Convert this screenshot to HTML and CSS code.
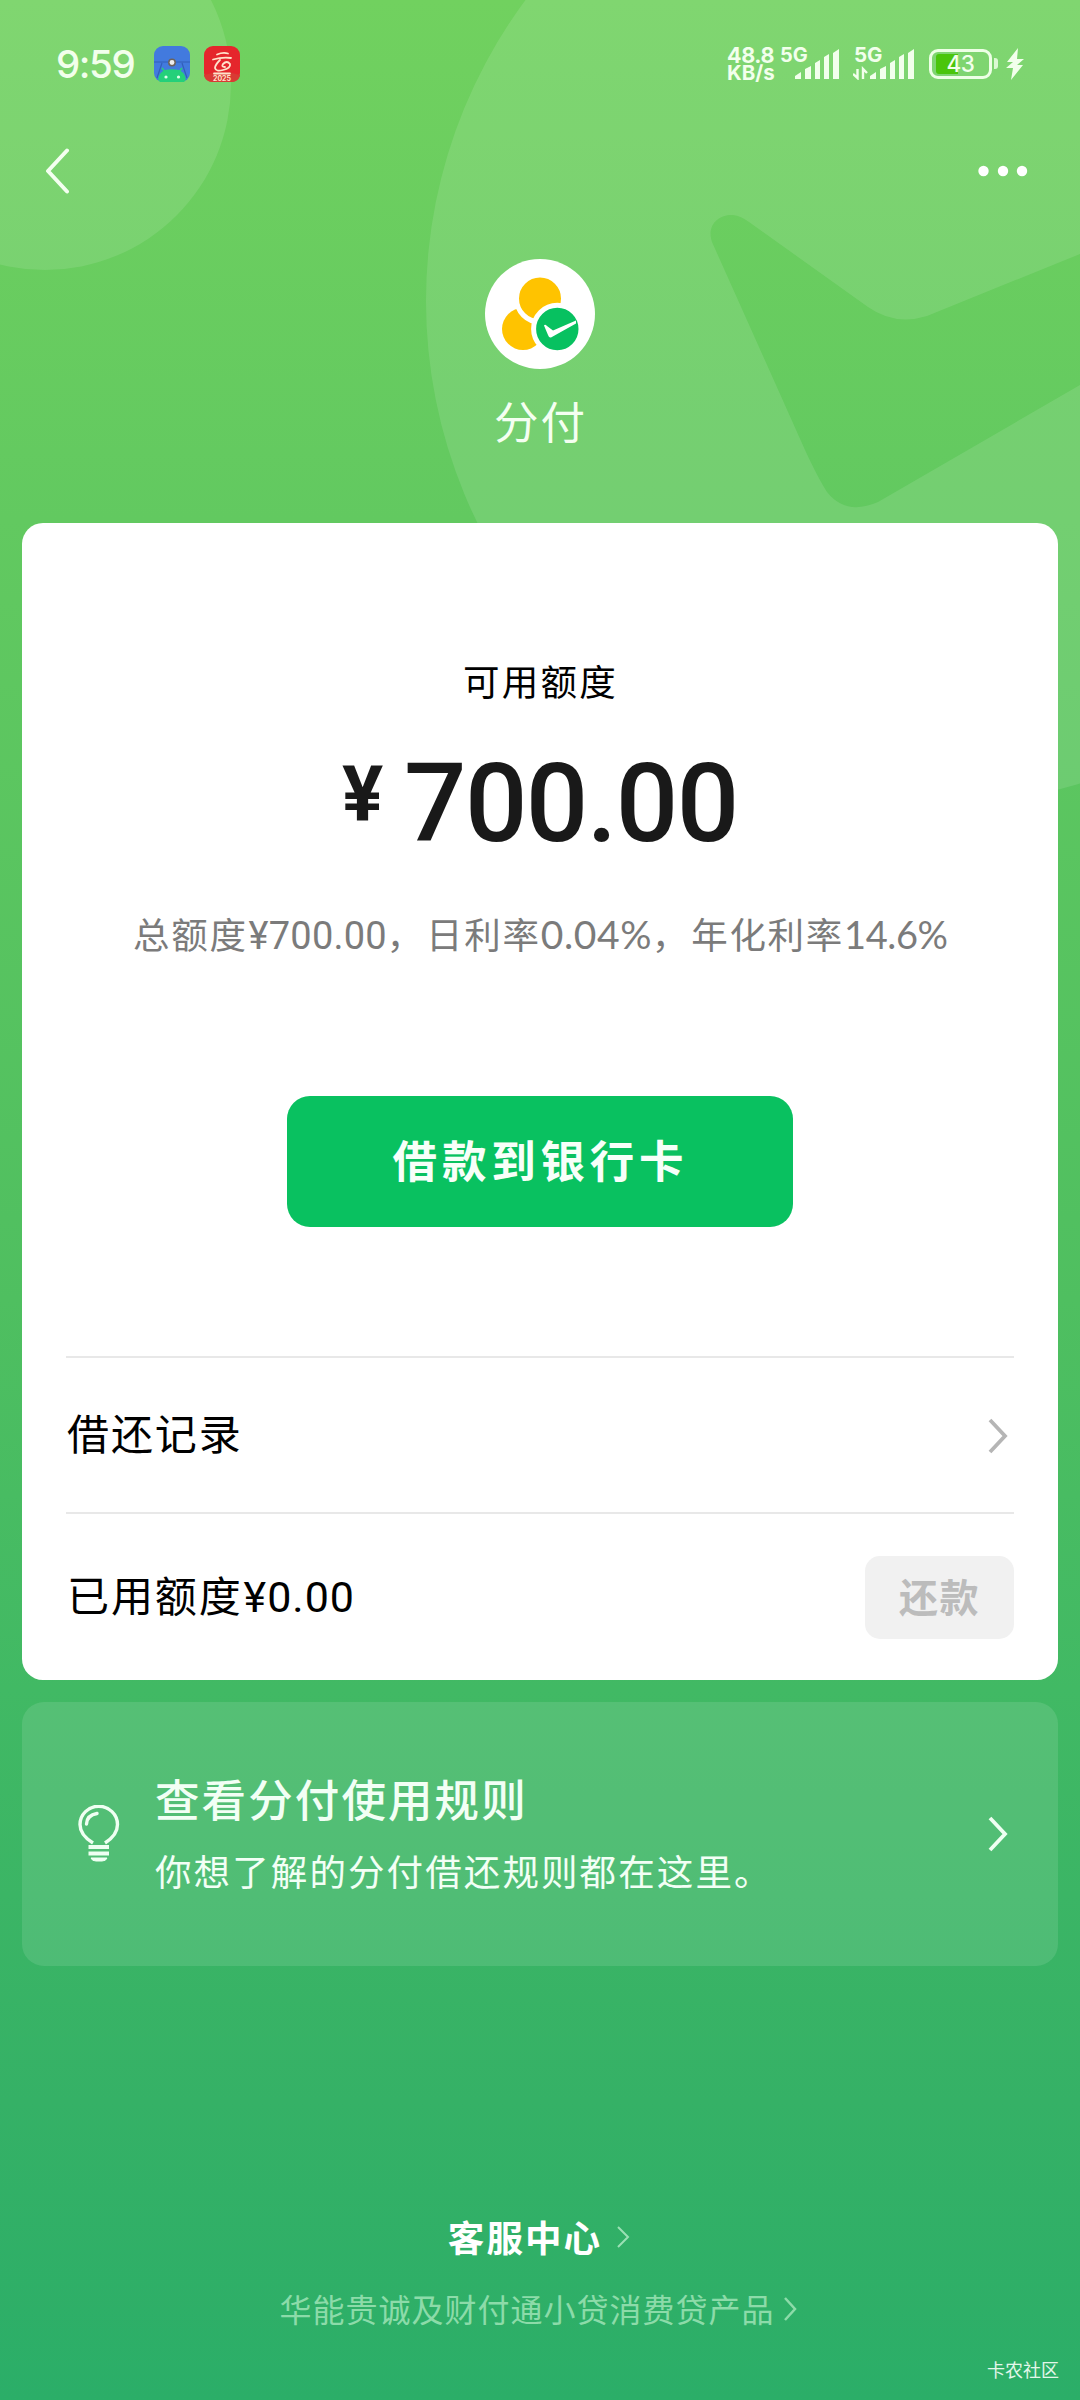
FILE: index.html
```html
<!DOCTYPE html>
<html lang="zh-CN">
<head>
<meta charset="utf-8">
<title>分付</title>
<link rel="stylesheet" href="styles.css">
</head>
<body>
<main class="page">
  <svg class="backdrop" viewBox="0 0 1080 2400" aria-hidden="true">
    <circle cx="45" cy="84" r="186" fill="#fff" fill-opacity=".11"/>
    <path fill="#fff" fill-opacity=".11" fill-rule="evenodd" d="M426 301a505 505 0 1 0 1010 0a505 505 0 1 0 -1010 0ZM712 242C706 224 720 214 733 215Q741 216 749 222L868 307Q895 326 927 316L1080 254L1440 90V200L1080 385L878 502Q846 516 827 492Q818 478 805 450Z"/>
  </svg>

  <header class="status">
    <span class="clock">9:59</span>
    <svg class="app app-first" viewBox="0 0 36 36">
      <rect width="36" height="36" rx="9" fill="#427ade"/>
      <path d="M0 16H36M8 17L3 32M28 17L33 32" stroke="#315fb8" stroke-width="1.2" fill="none"/>
      <circle cx="18" cy="16.500" r="3.200" fill="#eee" stroke="#6b625c" stroke-width="1.500"/>
      <path d="M5 33Q6 24 18 24T31 33Q30 36 27 36H9Q6 36 5 33ZM8 22L12 27M28 22L24 27" fill="#25d07a" stroke="#25d07a" stroke-width="1.500"/>
      <circle cx="12" cy="31" r="1.600" fill="#dfffe9"/><circle cx="24.500" cy="31" r="1.600" fill="#dfffe9"/>
    </svg>
    <svg class="app" viewBox="0 0 36 36">
      <rect width="36" height="36" rx="9" fill="#e5262c"/>
      <path d="M0 29Q18 23 36 29V30Q34 36 27 36H9Q2 36 0 30Z" fill="#d93a34"/>
      <path d="M13 8.500Q19 6 24 7.500M9 13.500Q18 11 27 12M16 14Q11 19 11 22Q12 26 19 24Q27 22 26 18Q23 14 19 18Q17 21 21 21M10 27.500H26" stroke="#ffe3cc" stroke-width="1.800" fill="none" stroke-linecap="round"/>
      <text class="app-year" x="18" y="35" text-anchor="middle">2025</text>
    </svg>
    <div class="speed"><span class="speed-value">48.8</span><span>KB/s</span></div>
    <div class="network">
      <span class="net-label">5G</span>
      <svg class="bars" viewBox="0 0 62 34"><path d="M17 33v-3l6-4v7ZM27 33V23l6-3v13ZM37 33V17l5-3v19ZM46 33V11l5-3v25ZM55 33V7l6-4v30Z" fill="#f2ffec"/></svg>
    </div>
    <div class="network network-second">
      <span class="net-label">5G</span>
      <svg class="bars" viewBox="0 0 62 34"><path d="M17 33v-3l6-4v7ZM27 33V23l6-3v13ZM37 33V17l5-3v19ZM46 33V11l5-3v25ZM55 33V7l6-4v30Z" fill="#f2ffec"/><path d="M0 28l4.500 4V23M10 33V23l4 4" stroke="#f2ffec" stroke-width="2.400" fill="none"/></svg>
    </div>
    <div class="battery"><i class="charge"></i><span class="percent">43</span></div>
    <i class="nub"></i>
    <svg class="bolt" viewBox="0 0 18 32"><path d="M12 0L1 14H7L0 20H7L5 32L17 17H11L18 11H11Z" fill="#f2ffec"/></svg>
  </header>

  <nav class="nav">
    <svg class="back" viewBox="0 0 25 46"><path d="M22 2.500L3 23L22 43.500" fill="none" stroke="#f4fff0" stroke-width="4" stroke-linecap="round" stroke-linejoin="round"/></svg>
    <svg class="more" viewBox="0 0 50 12"><g fill="#fff"><circle cx="5.500" cy="6" r="5.200"/><circle cx="25" cy="6" r="5.200"/><circle cx="44" cy="6" r="5.200"/></g></svg>
  </nav>

  <section class="brand">
    <svg class="logo" viewBox="0 0 110 110">
      <circle cx="55" cy="55" r="55" fill="#fff"/>
      <circle cx="38" cy="70" r="21" fill="#ffc300"/>
      <circle cx="55" cy="39.500" r="23.500" fill="#ffc300" stroke="#fff" stroke-width="5"/>
      <circle cx="72.300" cy="70" r="23.700" fill="#07c160" stroke="#fff" stroke-width="5"/>
      <path d="M59 66.500Q60 65 62 67L68 71.500L91 61.500V64.500L66 78.500Q64 79 63 76Z" fill="#fff"/>
    </svg>
    <h1 class="brand-name">分付</h1>
  </section>

  <section class="card">
    <p class="quota-label">可用额度</p>
    <div class="amount"><span class="yen">¥</span><span class="digits">700.00</span></div>
    <p class="terms"><span>总额度</span><span class="num num-total">¥700.00</span><span class="comma">，</span><span>日利率</span><span class="num num-day">0.04%</span><span class="comma">，</span><span>年化利率</span><span class="num num-year">14.6%</span></p>
    <button class="borrow">借款到银行卡</button>
    <div class="row">
      <span class="row-text">借还记录</span>
      <svg class="chevron" viewBox="0 0 22 38"><path d="M3 3L18 19L3 35" fill="none" stroke="#b5b5b5" stroke-width="3.800"/></svg>
    </div>
    <div class="row row-used">
      <span class="row-text">已用额度<span class="used-num">¥0.00</span></span>
      <button class="repay">还款</button>
    </div>
  </section>

  <section class="tip">
    <svg class="bulb" viewBox="0 0 42 58">
      <g fill="none" stroke="#effff2" stroke-width="3.400">
        <path d="M15 38Q2 30 2 19.500A18.500 18 0 0 1 39.500 19.500Q39.500 30 27 38"/>
        <path d="M8.500 19Q9 10 19 8.500" stroke-linecap="round"/>
        <path d="M10.500 42H31M10.500 48.500H31" stroke-width="4"/>
        <path d="M13 53Q14 56 18 56H24Q28 56 29 53Z" fill="#effff2" stroke-width="1"/>
      </g>
    </svg>
    <div class="tip-body">
      <h2 class="tip-title">查看分付使用规则</h2>
      <p class="tip-text">你想了解的分付借还规则都在这里。</p>
    </div>
    <svg class="chevron" viewBox="0 0 22 38"><path d="M3 3L18 19L3 35" fill="none" stroke="#effff2" stroke-width="3.800"/></svg>
  </section>

  <footer class="footer">
    <div class="service"><span>客服中心</span><svg class="service-arrow" viewBox="0 0 14 24"><path d="M2 2L12 12L2 22" fill="none" stroke="#9be0b5" stroke-width="2"/></svg></div>
    <div class="lender"><span>华能贵诚及财付通小贷消费贷产品</span><svg class="lender-arrow" viewBox="0 0 15 26"><path d="M2 2L12 13L2 24" fill="none" stroke="#8cdba9" stroke-width="2.500"/></svg></div>
    <div class="watermark">卡农社区</div>
  </footer>
</main>
</body>
</html>
```
FILE: styles.css
```css
* { box-sizing: border-box; margin: 0; padding: 0; }
body { font-family: "Noto Sans CJK SC", sans-serif; }
button { border: 0; font-family: inherit; }
svg { display: block; flex: none; }

.page {
  position: relative;
  width: 1080px;
  height: 2400px;
  overflow: hidden;
  display: flex;
  flex-direction: column;
  background: linear-gradient(#71d15f 0, #62c960 520px, #4fbf60 1300px, #41b964 1690px, #35b166 2100px, #2bae68 2400px);
}
.backdrop { position: absolute; inset: 0; width: 1080px; height: 2400px; }
.status, .nav, .brand, .card, .tip, .footer { position: relative; }

/* Status bar */
.status { height: 128px; display: flex; align-items: flex-start; padding: 46px 56px 0 56px; color: #f2ffec; font-family: Inter, sans-serif; }
.clock { width: 98px; font-size: 38.5px; line-height: 37px; font-weight: 500; letter-spacing: -1.4px; white-space: nowrap; }
.app { width: 36px; height: 36px; }
.app-first { margin-right: 14px; }
.app-year { font: 700 7px Inter, sans-serif; fill: #ffe3cc; }
.speed { margin-left: auto; width: 51px; display: flex; flex-direction: column; font-size: 20.5px; font-weight: 700; line-height: 18px; white-space: nowrap; }
.speed-value { font-size: 21.5px; letter-spacing: -.1px; }
.network { width: 62px; height: 34px; position: relative; }
.network-second { margin-left: 13px; }
.net-label { position: absolute; left: 1px; top: 0; font-size: 20.5px; line-height: 18px; font-weight: 700; }
.network:not(.network-second) .net-label { left: 2px; font-size: 20px; }
.speed-value { letter-spacing: -.4px; }
.bars { width: 62px; height: 34px; }
.battery { position: relative; margin: 3px 0 0 14px; width: 63px; height: 30px; border: 3px solid #edffe5; border-radius: 9px; text-align: center; }
.charge { position: absolute; left: 4px; top: 2px; width: 22px; height: 20px; border-radius: 3px 0 0 3px; background: #4ac50b; }
.percent { position: relative; font-size: 22.5px; line-height: 24px; font-weight: 500; letter-spacing: -.5px; display: block; }
.nub { width: 4px; height: 11px; margin: 12px 8px 0 2px; border-radius: 0 3px 3px 0; background: #dcf9d3; }
.bolt { width: 18px; height: 32px; margin-top: 2px; }

/* Navigation */
.nav { height: 130px; display: flex; justify-content: space-between; padding: 20px 52px 0 45px; }
.back { width: 25px; height: 46px; }
.more { width: 50px; height: 12px; margin-top: 17px; }

.brand { height: 265px; display: flex; flex-direction: column; align-items: center; }
.logo { width: 110px; height: 110px; margin-top: 1px; }
.brand-name { margin-top: 21px; font-size: 44.5px; line-height: 60px; font-weight: 400; letter-spacing: 2px; padding-left: 1px; color: #f4fff1; }

/* Quota card */
.card { height: 1157px; margin: 0 22px; padding: 0 44px; border-radius: 21px; background: #fff; display: flex; flex-direction: column; }
.quota-label { margin-top: 133px; height: 50px; line-height: 50px; font-size: 36.5px; letter-spacing: 2.2px; padding-left: 1px; text-align: center; color: #000; }
.amount { height: 112px; margin-top: 42px; padding-left: 276px; display: flex; align-items: flex-start; color: #191919; font-family: Roboto, sans-serif; }
.yen { width: 62px; font-size: 77px; line-height: 70px; padding-top: 12px; font-weight: 700; }
.digits { font-size: 110px; line-height: 112px; font-weight: 500; letter-spacing: -1.6px; }
.terms { height: 50px; margin: 49px 0 0 67px; display: flex; align-items: baseline; line-height: 50px; font-size: 36.5px; letter-spacing: 1.7px; color: #7b7b7b; white-space: nowrap; }
.num { font-family: Roboto, sans-serif; font-size: 38px; letter-spacing: .2px; }
.num-total { width: 139px; padding-left: 1px; }
.num-day { width: 111px; font-family: Lato, sans-serif; font-size: 39px; letter-spacing: .6px; }
.num-year { font-family: Lato, sans-serif; letter-spacing: -.4px; }
.comma { width: 39.5px; }
.borrow { align-self: center; width: 506px; height: 131px; margin-top: 137px; border-radius: 23px; background: #09c160; color: #f7fff9; font-size: 44.5px; font-weight: 700; letter-spacing: 4.8px; padding: 0 0 7px 1px; }
.row { height: 156px; border-top: 2px solid #e8e8e8; display: flex; align-items: center; justify-content: space-between; }
.borrow + .row { margin-top: 129px; }
.row-text { font-size: 42px; letter-spacing: 1.9px; padding: 0 0 7px 1px; color: #000; }
.row .chevron { margin: 2px 5px 0 0; }
.used-num { font-family: Roboto, sans-serif; font-size: 43px; letter-spacing: 1px; padding-left: 1px; }
.row-used { height: 167px; }
.repay { width: 149px; height: 83px; margin-top: 2px; padding-bottom: 6px; border-radius: 15px; background: #f1f1f1; color: #bcbcbc; font-size: 39px; font-weight: 700; letter-spacing: 1.5px; }
.chevron { width: 22px; height: 38px; }

/* Rules entry */
.tip { height: 264px; margin: 22px 22px 0; padding: 0 49px 0 56px; border-radius: 22px; background: rgba(255, 255, 255, .11); display: flex; align-items: center; color: #f2fff5; }
.bulb { width: 42px; height: 58px; margin-right: 35px; }
.tip-body { flex: 1; }
.tip-title { height: 73px; line-height: 68px; font-size: 44.5px; font-weight: 500; letter-spacing: 2.1px; }
.tip-text { height: 68px; line-height: 68px; font-size: 36.5px; letter-spacing: 2.1px; }

/* Footer */
.footer { height: 434px; padding-top: 245px; display: flex; flex-direction: column; align-items: center; }
.service, .lender { display: flex; align-items: center; }
.service { height: 50px; color: #fff; font-size: 36.5px; font-weight: 700; letter-spacing: 2.1px; padding-right: 2px; }
.service-arrow { width: 14px; height: 24px; margin: 2px 0 0 14px; }
.lender { height: 48px; margin-top: 23px; color: #8cdba9; font-size: 32px; letter-spacing: 1px; padding-right: 3px; }
.lender-arrow { width: 15px; height: 26px; margin: 2px 0 0 8px; }
.watermark { align-self: flex-end; margin: 24px 21px 0 0; font-size: 18px; line-height: 26px; color: #e3f7ea; }
```
